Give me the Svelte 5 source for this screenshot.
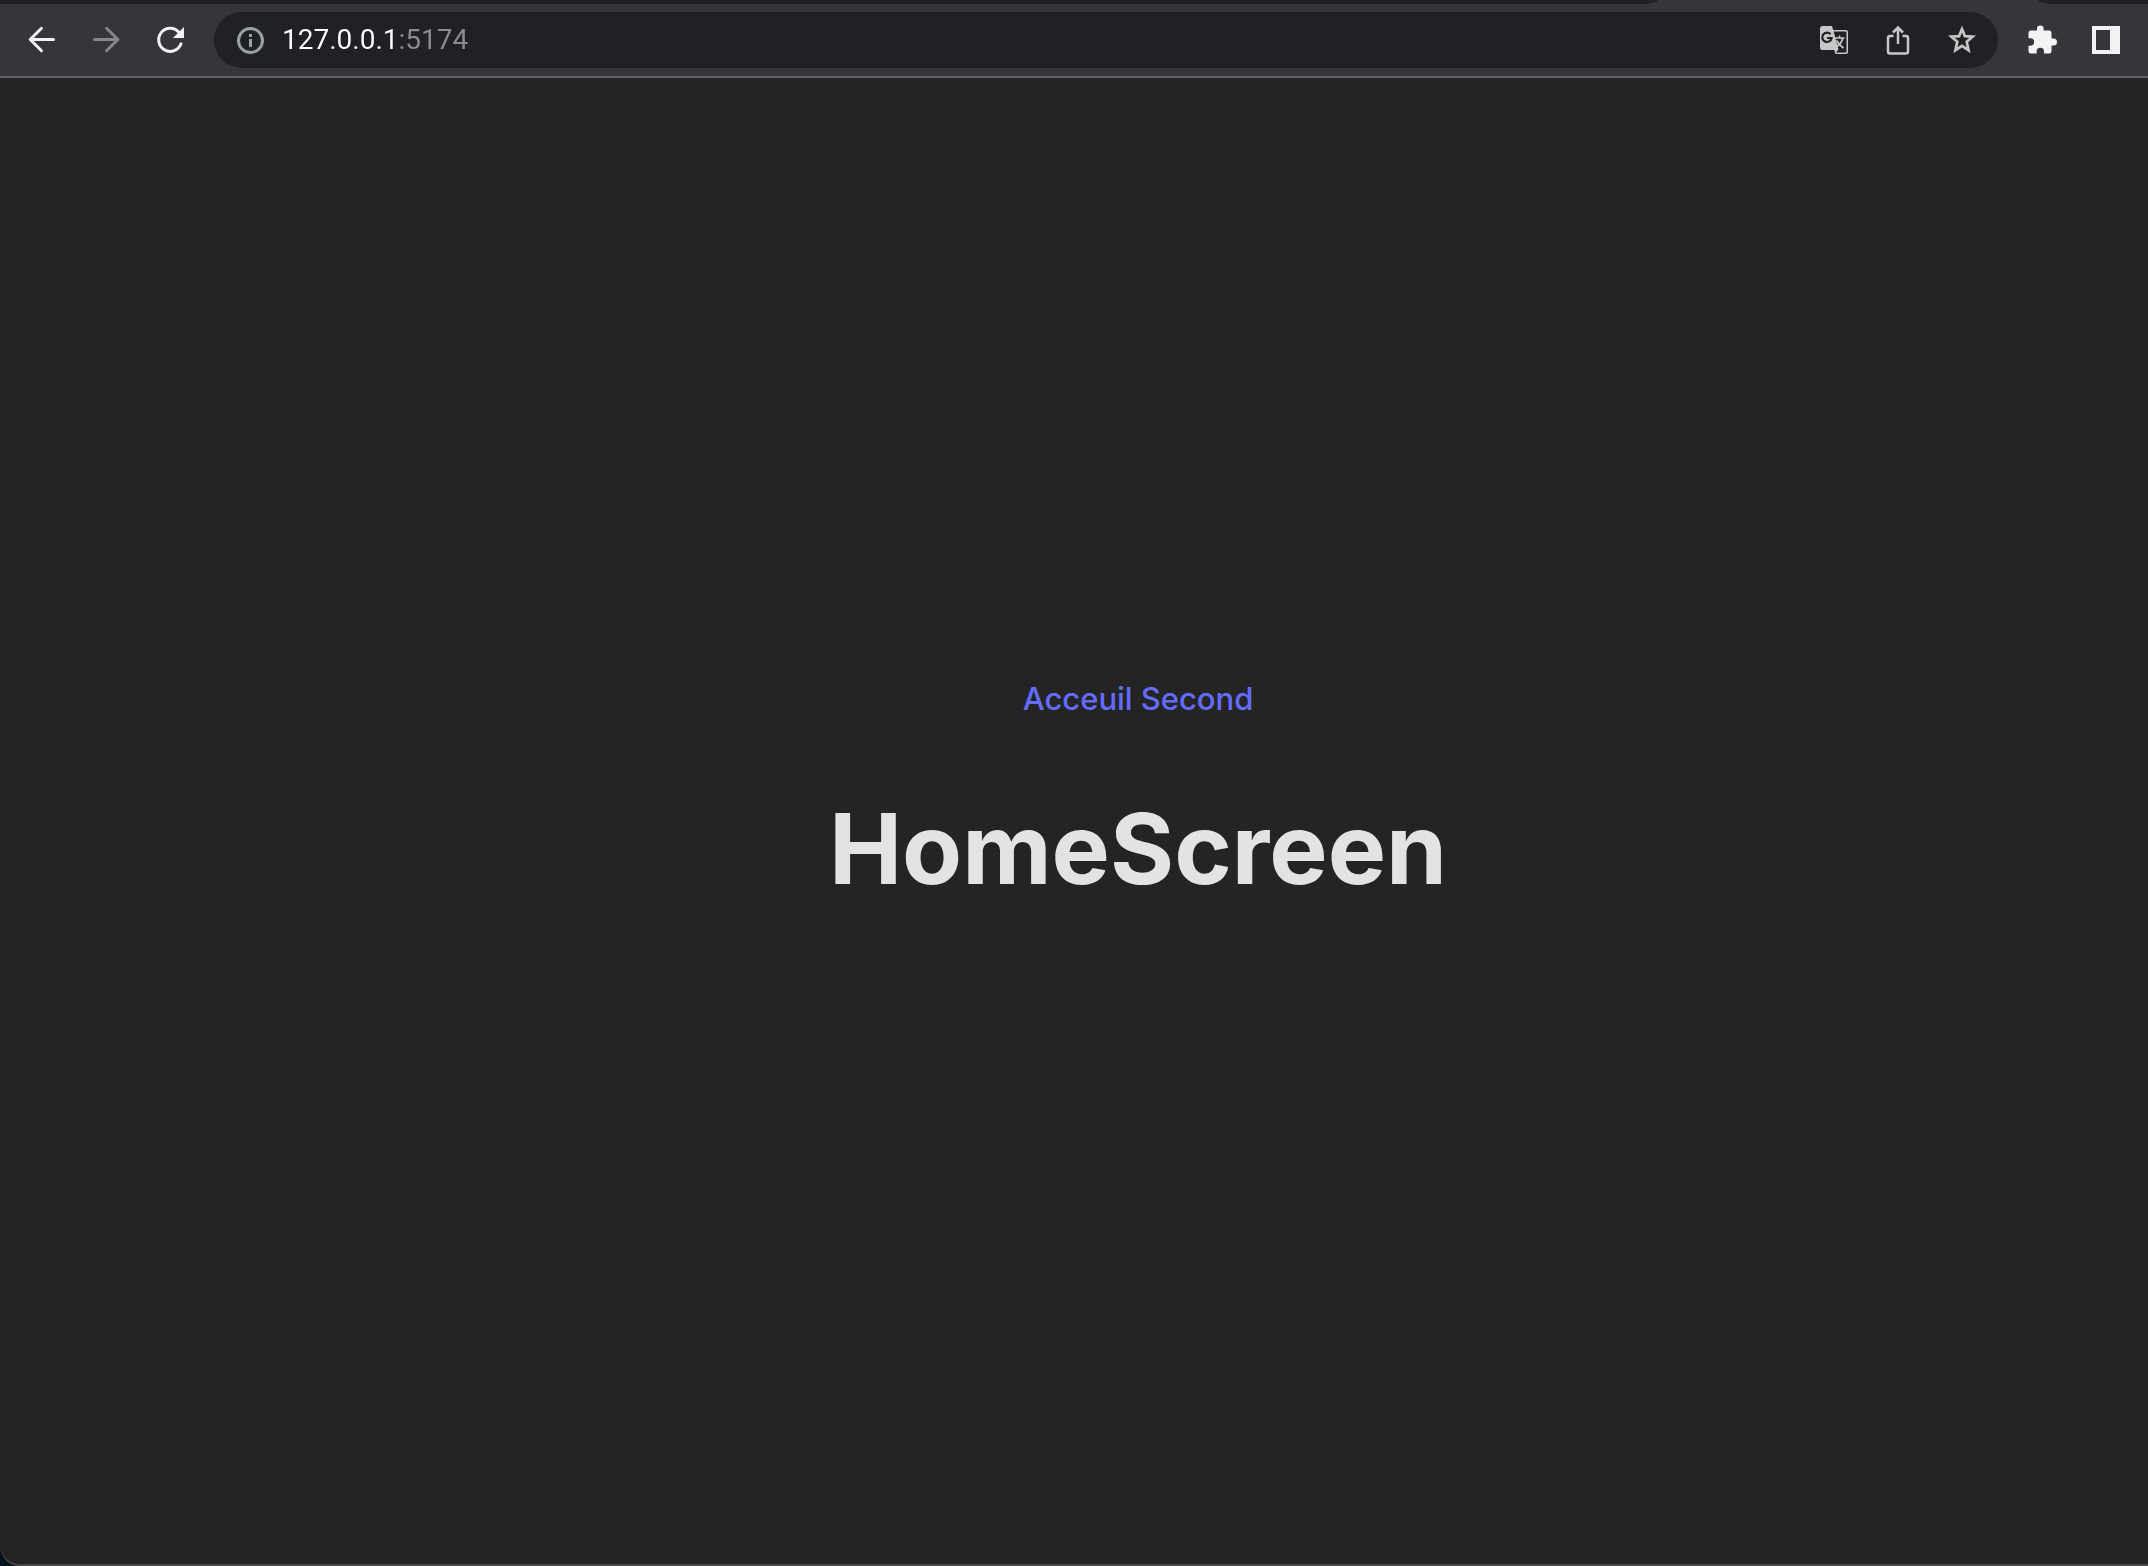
<script>
  let address = $state('127.0.0.1:5174');
</script>

<div class="window">
  <div class="tabs" aria-hidden="true">
    <span class="strip left"></span>
    <span class="strip right"></span>
  </div>

  <header class="toolbar">
    <nav class="group" aria-label="Navigation">
      <button type="button" aria-label="Back">
        <svg class="bright" viewBox="0 0 32 32"><path class="line" d="M27.500 15.500H4.800M15.500 4.300L4.200 15.500L15.500 26.700" /></svg>
      </button>
      <button type="button" aria-label="Forward">
        <svg class="faded" viewBox="0 0 32 32"><path class="line" d="M4.500 15.500H28M16.500 4.300L27.900 15.500L16.500 26.700" /></svg>
      </button>
      <button type="button" aria-label="Reload">
        <svg class="bright" viewBox="0 0 32 32">
          <path class="line" d="M24.800 8.200A11.500 11.500 0 1 0 27 19.800" />
          <path fill="currentColor" d="M30 3V14H19Z" />
        </svg>
      </button>
    </nav>

    <form class="omnibox" onsubmit={(e) => e.preventDefault()}>
      <button class="info" type="button" aria-label="View site information">
        <svg class="info-icon" viewBox="0 0 32 32">
          <circle class="line" cx="16.500" cy="16.500" r="12" />
          <path fill="currentColor" d="M15 10h3v3h-3zM15 15h3v8h-3z" />
        </svg>
      </button>
      <input type="text" aria-label="Address" bind:value={address} />
      <button type="button" aria-label="Translate this page">
        <svg class="soft" viewBox="0 0 32 32">
          <path fill="currentColor" d="M4.500 2H14l1.200 4H28a2 2 0 0 1 2 2v20a2 2 0 0 1-2 2H17.500l-1.300-4H4.500A2.500 2.500 0 0 1 2 23.500V4.500A2.500 2.500 0 0 1 4.500 2Z" />
          <path fill="#202124" d="M15.700 7.500H27.500a1 1 0 0 1 1 1v19a1 1 0 0 1-1 1H18l2.500-3Z" />
          <path fill="none" stroke="#202124" stroke-width="2.200" d="M12.500 10.200A4.700 4.700 0 1 0 13.600 14H9" />
          <path fill="none" stroke="currentColor" stroke-width="1.700" d="M17 14H26.500M21.500 11.500V14M24.800 14C24 18 21.500 21 18 23M18.500 16.500C20 19.500 22.500 22 25.500 24" />
        </svg>
      </button>
      <button type="button" aria-label="Share this page">
        <svg class="soft" viewBox="0 0 32 32">
          <path class="thin" d="M11.500 12H8a2 2 0 0 0-2 2v13.500a2 2 0 0 0 2 2h16a2 2 0 0 0 2-2V14a2 2 0 0 0-2-2h-3.500M16 20V4.500M11 8.500L16 3.500L21 8.500" />
        </svg>
      </button>
      <button type="button" aria-label="Bookmark this page">
        <svg class="soft" viewBox="0 0 32 32">
          <path fill="none" stroke="currentColor" stroke-width="2.700" stroke-linejoin="miter" d="M16 5L18.900 12.100L26.600 12.700L20.700 17.700L22.600 26.200L16 21.800L9.400 26.200L11.300 17.700L5.400 12.700L13.100 12.100Z" />
        </svg>
      </button>
    </form>

    <div class="group">
      <button type="button" aria-label="Extensions">
        <svg class="bright" viewBox="0 0 32 32">
          <path fill="currentColor" d="M11 6.500V4.800a3.300 3.300 0 0 1 6.600 0V6.500H23A2.500 2.500 0 0 1 25.500 9V14.500H27.500a3.500 3.500 0 0 1 0 7H25.500V27A2.500 2.500 0 0 1 23 29.500H18V27.500a3.700 3.700 0 0 0-7.400 0V29.500H5A2.500 2.500 0 0 1 2.500 27V21.700H4.500a3.700 3.700 0 0 0 0-7.400H2.500V9A2.500 2.500 0 0 1 5 6.500Z" />
        </svg>
      </button>
      <button type="button" aria-label="Side panel">
        <svg class="bright" viewBox="0 0 32 32">
          <path fill="currentColor" fill-rule="evenodd" d="M2 2H30V30H2ZM6 6V26H20V6Z" />
        </svg>
      </button>
    </div>
  </header>

  <main>
    <nav class="links" aria-label="Pages">
      <a href="#accueil">Acceuil</a>
      <a href="#second">Second</a>
    </nav>
    <h1>HomeScreen</h1>
  </main>
</div>

<style>
  :global(body) {
    margin: 0;
    background: #04121c;
  }

  .window {
    box-sizing: border-box;
    min-height: 100vh;
    display: flex;
    flex-direction: column;
    overflow: hidden;
    background: #242424;
    border-bottom: 2px solid #484848;
    border-bottom-left-radius: 20px;
    font-family: Inter, 'Liberation Sans', sans-serif;
  }

  .tabs {
    display: flex;
    justify-content: space-between;
    height: 4px;
    background: #35363a;
  }

  .strip {
    background: #202124;
  }

  .left {
    width: 77.2%;
    border-bottom-right-radius: 16px 4px;
  }

  .right {
    width: 5.1%;
    border-bottom-left-radius: 16px 4px;
  }

  .toolbar {
    display: flex;
    align-items: center;
    gap: 12px;
    padding: 8px 10px;
    background: #35363a;
    border-bottom: 2px solid #5f6064;
  }

  .group {
    display: flex;
  }

  button {
    display: grid;
    place-items: center;
    flex: none;
    width: 64px;
    height: 56px;
    padding: 0;
    border: 0;
    background: none;
  }

  svg {
    width: 32px;
    height: 32px;
  }

  .line,
  .thin {
    fill: none;
    stroke: currentColor;
    stroke-width: 3;
    stroke-linecap: round;
    stroke-linejoin: round;
  }

  .thin {
    stroke-width: 2.5;
    stroke-linecap: butt;
    stroke-linejoin: miter;
  }

  .bright {
    color: #f1f3f4;
  }

  .faded {
    color: #86878a;
  }

  .soft {
    color: #c7c7c7;
  }

  .info-icon {
    color: #9aa0a6;
  }

  .omnibox {
    flex: 1;
    display: flex;
    align-items: center;
    min-width: 0;
    padding: 0 4px 0 12px;
    border-radius: 28px;
    background: #202124;
  }

  .info {
    width: 48px;
  }

  input {
    flex: 1;
    min-width: 0;
    height: 56px;
    padding: 0 0 0 8px;
    border: 0;
    outline: 0;
    font: 400 28px/56px Roboto, 'Liberation Sans', sans-serif;
    color: transparent;
    caret-color: #fff;
    background: linear-gradient(to right, #fff 125px, #8b8c8e 125px);
    background-clip: text;
    -webkit-background-clip: text;
  }

  main {
    flex: 1;
    display: flex;
    flex-direction: column;
    justify-content: center;
    align-items: center;
    padding: 4px 0 0 128px;
    color: #e3e3e3;
  }

  .links {
    display: flex;
    gap: 8px;
    font-size: 31px;
    line-height: 48px;
    font-weight: 450;
  }

  a {
    color: #646cff;
    text-decoration: none;
  }

  h1 {
    margin: 70px 0 66px;
    font-size: 98px;
    line-height: 112px;
    font-weight: 700;
  }
</style>
